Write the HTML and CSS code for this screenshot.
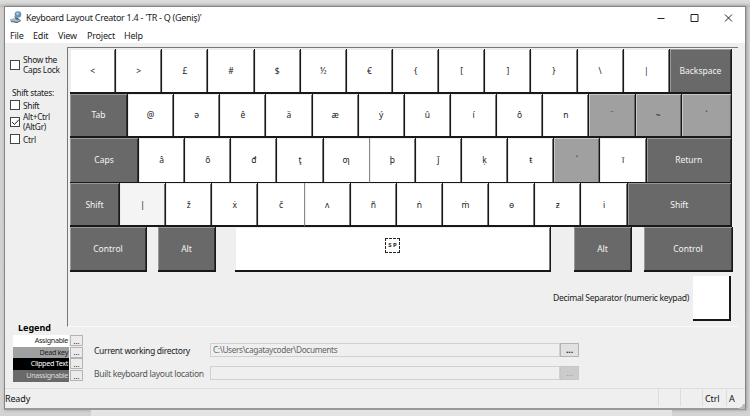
FILE: index.html
```html
<!DOCTYPE html>
<html lang="en">
<head>
<meta charset="utf-8">
<title>Keyboard Layout Creator</title>
<link rel="stylesheet" href="styles.css">
</head>
<body>
<div class="window">
  <header class="titlebar">
    <svg class="app-icon" width="12" height="12" viewBox="0 0 12 12"><path d="M0 8 5 7l6 2-4 3-7-2z" fill="#aeb4b9"/><path d="M1 10.500l6 1 4-2" fill="none" stroke="#555d63"/><path d="M4 5l4 2 2 2-4-.5z" fill="#446987"/><circle cx="8" cy="3.500" r="3.300" fill="#6993b8"/><circle cx="7.500" cy="2.700" r="1.300" fill="#b4d3e7"/></svg>
    <h1 class="title">Keyboard Layout Creator 1.4 - 'TR - Q (Geniş)'</h1>
    <div class="controls">
      <svg width="8" height="10" viewBox="0 0 8 10"><path d="M.5 5.500h7" stroke="#222"/></svg>
      <svg width="9" height="10" viewBox="0 0 9 10"><path d="M1 1.500h7v7H1z" fill="none" stroke="#222"/></svg>
      <svg width="9" height="10" viewBox="0 0 9 10"><path d="m1 1.500 7 7m0-7-7 7" stroke="#222"/></svg>
    </div>
  </header>
  <nav class="menu"><span class="m-file">File</span><span class="m-edit">Edit</span><span class="m-view">View</span><span class="m-project">Project</span><span>Help</span></nav>
  <div class="main">
    <aside class="states">
      <div class="check tall"><i class="box"></i><div><div>Show the</div><div>Caps Lock</div></div></div>
      <p class="heading">Shift states:</p>
      <div class="check"><i class="box"></i><span>Shift</span></div>
      <div class="check tall alt"><i class="box"><svg width="9" height="9" viewBox="0 0 9 9"><path d="m1 4 2.500 2.500L8 1.500" fill="none" stroke="#222"/></svg></i><div><div>Alt+Ctrl</div><div>(AltGr)</div></div></div>
      <div class="check"><i class="box"></i><span>Ctrl</span></div>
    </aside>
    <section class="board">
      <div class="row r1"><b class="key">&lt;</b><b class="key">&gt;</b><b class="key">£</b><b class="key">#</b><b class="key">$</b><b class="key">½</b><b class="key">€</b><b class="key">{</b><b class="key">[</b><b class="key">]</b><b class="key">}</b><b class="key">\</b><b class="key">|</b><b class="key dark fill">Backspace</b></div>
      <div class="row r2"><b class="key dark tab">Tab</b><b class="key">@</b><b class="key">ə</b><b class="key">ê</b><b class="key">ä</b><b class="key">æ</b><b class="key">ý</b><b class="key">û</b><b class="key">í</b><b class="key">ô</b><b class="key">n</b><b class="key dead">¨</b><b class="key dead">~</b><b class="key dead fill">`</b></div>
      <div class="row r3"><b class="key dark caps">Caps</b><b class="key">â</b><b class="key">ő</b><b class="key">đ</b><b class="key">ţ</b><b class="key thin">ƣ</b><b class="key">þ</b><b class="key">ǰ</b><b class="key">ķ</b><b class="key">ŧ</b><b class="key dead">´</b><b class="key">ī</b><b class="key dark fill">Return</b></div>
      <div class="row r4"><b class="key dark lshift">Shift</b><b class="key hover">|</b><b class="key">ž</b><b class="key">ẋ</b><b class="key thin">č</b><b class="key">ʌ</b><b class="key">ñ</b><b class="key">ṅ</b><b class="key">ṁ</b><b class="key">ɵ</b><b class="key">ƶ</b><b class="key">i</b><b class="key dark fill">Shift</b></div>
      <div class="row r5"><b class="key dark ctrl">Control</b><b class="key dark altkey">Alt</b><b class="key space"><span class="sp">S P</span></b><b class="key dark altgr">Alt</b><b class="key dark rctrl">Control</b></div>
      <div class="decimal"><span>Decimal Separator (numeric keypad)</span><b class="key numkey"></b></div>
    </section>
  </div>
  <div class="bottom">
    <section class="legend">
      <h2>Legend</h2>
      <div class="item"><span class="white">Assignable</span><button>...</button></div>
      <div class="item"><span class="grey">Dead key</span><button>...</button></div>
      <div class="item"><span class="black">Clipped Text</span><button>...</button></div>
      <div class="item"><span class="slate">Unassignable</span><button>...</button></div>
    </section>
    <section class="paths">
      <div class="path"><span class="lab cur">Current working directory</span><span class="field">C:\Users\cagataycoder\Documents</span><button>...</button></div>
      <div class="path off"><span class="lab">Built keyboard layout location</span><span class="field"></span><button>...</button></div>
    </section>
  </div>
  <footer class="status"><span class="ready">Ready</span><span class="cell"></span><span class="cell"></span><span class="cell c3">Ctrl</span><span class="cell c4">A</span></footer>
</div>
<div class="behind"><i></i></div>
</body>
</html>
```
FILE: styles.css
```css
* { box-sizing: border-box; }
body {
  margin: 0; width: 750px; height: 416px; overflow: hidden;
  padding: 6px 4px 0;
  background: linear-gradient(#dedede 0, #d4d4d4 4px, #bcbcbc 6px, #d0d0d0 8px, #d3d3d3 100%);
  font-family: "Noto Sans", "Open Sans", sans-serif; font-size: 8.6px; color: #222;
}
.window {
  width: 742px; height: 404px; display: flex; flex-direction: column;
  border: 1px solid #858585; border-bottom: 2px solid #999; background: #efefef;
  box-shadow: 1px 0 3px #999;
}
.titlebar { height: 21px; flex: none; background: #fff; display: flex; align-items: center; padding: 0 12px 0 5px; }
.app-icon { margin-top: -1px; }
.title { margin: 0 0 0 4px; font-size: 9px; font-weight: 400; line-height: 20px; letter-spacing: -.29px; white-space: nowrap; }
.controls { margin-left: auto; display: flex; gap: 25px; }
.menu { height: 15px; flex: none; background: #fff; display: flex; padding-left: 5px; font-size: 9px; line-height: 16px; letter-spacing: -.2px; }
.m-file { width: 23px; } .m-edit { width: 25px; } .m-view { width: 29px; } .m-project { width: 37px; }
.main { height: 284px; flex: none; display: flex; padding-top: 4px; }
.states { width: 62px; padding: 8px 0 0 5px; letter-spacing: -.3px; font-size: 8.400px; }
.check { display: flex; align-items: center; height: 12px; gap: 3px; line-height: 9px; white-space: nowrap; }
.check.tall { height: 20px; }
.check.alt { margin: 1px 0 0; }
.check.alt + .check { margin-top: 1px; }
.check.tall > div { display: grid; grid-auto-rows: 10px; }
.box { width: 10px; height: 10px; border: 1px solid #444; background: #fff; flex: none; display: flex; }
.box svg { margin: -.5px; }
.heading { margin: 12px 0 0 2px; line-height: 12px; height: 12px; }
.board { width: 671px; height: 280px; padding: 1px 0 0 2px; border: solid #777; border-width: 1px 0 0 1px; border-bottom: 1px solid #fafafa; }
.row { display: flex; width: 662px; height: 44.600px; }
.key {
  width: 46.150px; height: 100%; flex: none; display: flex; align-items: center; justify-content: center;
  background: #fff; border: solid #181818; border-width: 0 1.500px 2px 0; font-weight: 400; font-size: 8.500px; line-height: 12px;
  box-shadow: inset 1px 1px #ededed; padding-top: 1px;
}
.row .key:not(.thin) { border-right-width: 1px; box-shadow: inset 1px 1px #ededed, inset -1px 0 #777; }
.row .key.thin { border-right: 1px solid #888; }
.row .key.dark { box-shadow: inset 1px 1px #999, inset -1px 0 #333; }
.row .key.dead { box-shadow: inset 1px 1px #c7c7c7, inset -1px 0 #666; }
.r3 .key { border-bottom-width: 1px; }
.r5 .key { height: 44.500px; }
.key.fill { flex: 1; }
.dark { background: #696969; color: #f4f4f4; }
.dead { background: #a0a0a0; }
.hover { background: #f4f4f4; }
.tab { width: 58px; } .caps { width: 69px; } .lshift { width: 50px; }
.ctrl { width: 77px; } .altkey { width: 58px; margin-left: 11px; }
.key.space { width: 316px; margin-left: 19px; align-items: flex-start; padding-top: 11px; }
.sp { width: 15px; height: 15px; border: 1px dashed #222; font-size: 6px; font-weight: 700; line-height: 13px; text-align: center; white-space: pre; }
.altgr { width: 58px; margin-left: 23px; } .rctrl { width: 89px; margin-left: 12px; }
.decimal { display: flex; width: 661px; justify-content: flex-end; align-items: center; gap: 4px; margin-top: 4px; height: 45px; font-size: 8.600px; letter-spacing: -.31px; white-space: nowrap; }
.numkey { width: 38px; box-shadow: none; border-right-width: 2px; }
button { font: inherit; padding: 0; border: 1px solid #b4b4b4; background: #ececec; color: #222; }
.bottom { height: 67px; flex: none; display: flex; padding-left: 8px; margin-top: -6px; }
.legend { width: 70px; }
.legend h2 { margin: 0; height: 14px; padding-left: 5px; font-size: 9px; line-height: 13px; color: #000; }
.item { display: flex; height: 11.700px; gap: 1px; font-size: 7.200px; line-height: 11px; letter-spacing: -.33px; }
.item span { width: 56px; text-align: right; padding-right: 1px; white-space: nowrap; }
.item button { width: 13px; height: 11px; line-height: 8px; letter-spacing: 0; }
.white { background: #fff; } .grey { background: #a0a0a0; } .black { background: #000; color: #fff; } .slate { background: #696969; color: #ddd; }
.paths { padding: 22px 0 0 11px; }
.path { display: flex; height: 14px; margin-bottom: 9px; line-height: 14px; white-space: nowrap; }
.lab { width: 116px; font-size: 8.600px; line-height: 16px; letter-spacing: -.34px; }
.field { width: 350px; border: 1px solid #d0d0d0; padding-left: 2px; color: #666; line-height: 12px; font-size: 8.300px; letter-spacing: -.4px; }
.path .field { letter-spacing: -.38px; }
.path button { width: 19px; line-height: 12px; background: #e1e1e1; }
.path:not(.off) button { font-weight: 700; }
.off { color: #555; }
.path.off button { background: #ccc; border-color: #c6c6c6; color: #999; }
.status {
  flex: 1; border-top: 1px solid #ddd; display: flex; line-height: 20px; font-size: 9px; color: #111; letter-spacing: -.15px;
  background: linear-gradient(135deg, transparent 50%, #bbb 50%) right bottom / 6px 6px no-repeat;
}
.ready { width: 653px; }
.cell { width: 22px; border-left: 1px solid #ddd; height: 17px; }
.c3 { width: 24px; padding-left: 2px; } .c4 { padding-left: 2px; width: 18px; }
.behind { display: flex; height: 6px; padding-left: 87px; }
.behind i { width: 581px; background: #e4e4e4; }
```
